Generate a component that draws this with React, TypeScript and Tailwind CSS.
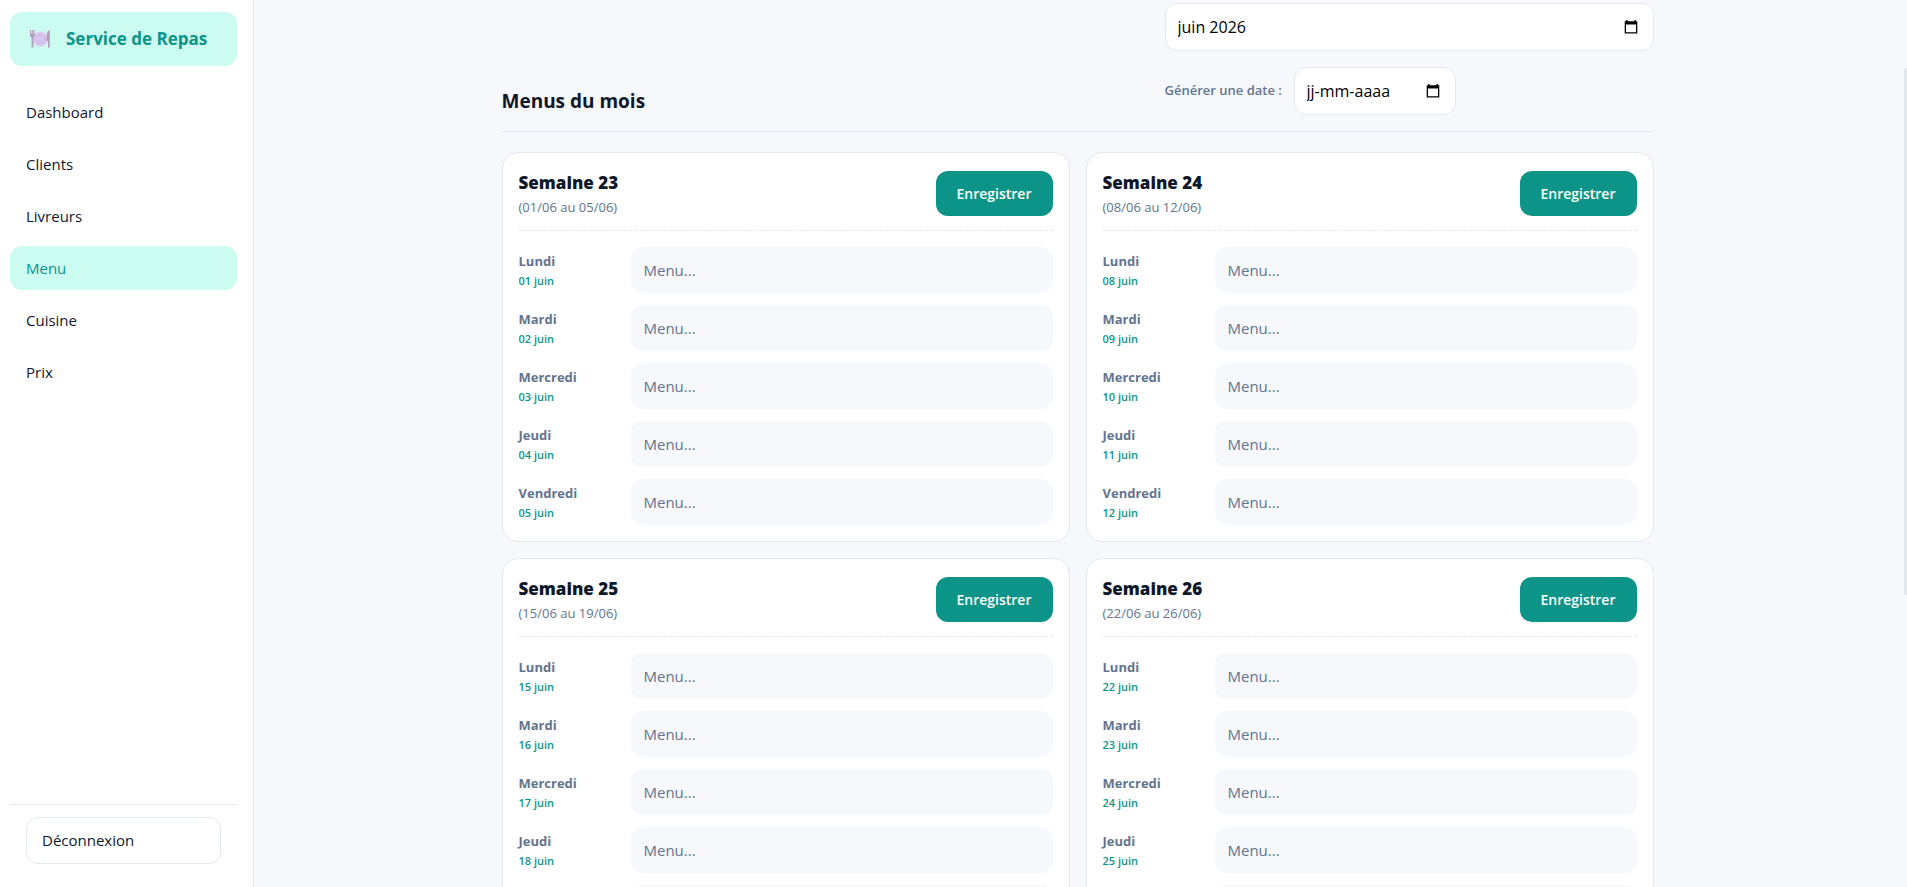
import { useState } from 'react';
import clsx from 'clsx';

const navItems = ['Dashboard', 'Clients', 'Livreurs', 'Menu', 'Cuisine', 'Prix'];
const dayNames = ['Lundi', 'Mardi', 'Mercredi', 'Jeudi', 'Vendredi'];

// premier lundi de chaque semaine de juin
const weeks = [
  { number: 23, monday: 1 },
  { number: 24, monday: 8 },
  { number: 25, monday: 15 },
  { number: 26, monday: 22 }
];

function pad(value: number) {
  return String(value).padStart(2, '0');
}

function PlateIcon() {
  return (
    <svg className="h-5 w-5" viewBox="0 0 20 20" aria-hidden="true">
      <circle cx="10.5" cy="10" r="7.5" fill="#dccbf1" />
      <circle cx="10.5" cy="10" r="4.800" fill="#d8c5ef" stroke="#c3b0de" strokeWidth=".9" />
      <g fill="#b0a2bb">
        <path d="M0 1h1v3.500h.8V1h1.200v3.500h.8V1h1v5.500c0 1-.6 1.500-1.300 1.800V18.500H1.500V8.300C.6 8 0 7.500 0 6.500z" />
        <path d="M19.800 1v17.500H18v-6.500h-1.400V6.500c0-3 1.200-5 3.200-5.500z" />
      </g>
    </svg>
  );
}

function CalendarIcon() {
  return (
    <svg className="h-4 w-4" viewBox="0 0 16 16" aria-hidden="true">
      <path
        d="M3 1h1.500v1.200h7V1H13v1.200h1.300v12.300H1.700V2.200H3zM3 5.500v7.700h10V5.500z"
        fill="#000"
        fillRule="evenodd"
      />
    </svg>
  );
}

type DateFieldProps = {
  id: string;
  label: string;
  value: string;
  placeholder?: string;
  className?: string;
  onChange: (value: string) => void;
};

function DateField({ id, label, value, placeholder, className, onChange }: DateFieldProps) {
  return (
    <div className={clsx('flex h-12 items-center rounded-xl border border-slate-200 bg-white px-3', className)}>
      <input
        id={id}
        type="text"
        aria-label={label}
        value={value}
        placeholder={placeholder}
        onChange={(e) => onChange(e.target.value)}
        className="w-full min-w-0 flex-1 bg-transparent text-base text-black outline-none placeholder:text-black"
      />
      <button type="button" aria-label="Ouvrir le calendrier" className="mr-0.5">
        <CalendarIcon />
      </button>
    </div>
  );
}

function Sidebar() {
  return (
    <aside className="flex w-[254px] shrink-0 flex-col border-r border-slate-200 bg-white pt-3 pr-4 pb-[11px] pl-2.5">
      <div className="flex h-[54px] items-center gap-4 rounded-xl bg-[#ccfbf1] px-5 text-[17px] font-bold whitespace-nowrap text-[#0d9488]">
        <PlateIcon />
        Service de Repas
      </div>
      <nav className="mt-6 flex flex-col gap-2">
        {navItems.map((item) => (
          <a
            key={item}
            href="#"
            className={clsx(
              'flex h-11 items-center rounded-xl px-4',
              item === 'Menu' ? 'bg-[#ccfbf1] text-[#0d9488]' : 'text-slate-900'
            )}
          >
            {item}
          </a>
        ))}
      </nav>
      <div className="mt-auto border-t border-slate-200 px-4 py-3">
        <button type="button" className="h-[47px] w-full rounded-xl border border-slate-200 px-[15px] text-left">
          Déconnexion
        </button>
      </div>
    </aside>
  );
}

function WeekCard({ number, monday }: { number: number; monday: number }) {
  const [menus, setMenus] = useState(dayNames.map(() => ''));

  function updateMenu(index: number, value: string) {
    setMenus(menus.map((menu, i) => (i === index ? value : menu)));
  }

  return (
    <form className="rounded-2xl border border-slate-200 bg-white p-4" onSubmit={(e) => e.preventDefault()}>
      <div className="flex items-center justify-between border-b border-dashed border-slate-200 pb-3">
        <div>
          <h3 className="text-[17px] leading-7 font-extrabold">Semaine {number}</h3>
          <p className="text-[13px] leading-[21px] text-slate-500">
            ({pad(monday)}/06 au {pad(monday + 4)}/06)
          </p>
        </div>
        <button type="submit" className="h-[45px] w-[117px] rounded-xl bg-[#0d9488] text-sm font-semibold text-white">
          Enregistrer
        </button>
      </div>
      <div className="mt-4 space-y-3">
        {dayNames.map((day, index) => {
          const id = `menu-${number}-${index}`;
          return (
            <div key={day} className="flex items-center gap-3">
              <label htmlFor={id} className="w-[100px] shrink-0 pt-0.5 text-[13px] leading-5 font-bold text-slate-500">
                {day}
                <span className="block text-[11px] font-semibold text-[#0d9488]">{pad(monday + index)} juin</span>
              </label>
              <input
                id={id}
                type="text"
                placeholder="Menu..."
                value={menus[index]}
                onChange={(e) => updateMenu(index, e.target.value)}
                className="h-[46px] min-w-0 flex-1 rounded-xl bg-[#f7f8fc] px-[13px] outline-none placeholder:text-slate-500"
              />
            </div>
          );
        })}
      </div>
    </form>
  );
}

export default function App() {
  const [month, setMonth] = useState('juin 2026');
  const [date, setDate] = useState('');

  return (
    <div className="flex h-screen bg-[#f7f8fc] font-['Open_Sans','Noto_Sans',sans-serif] text-[15px] text-slate-900">
      <Sidebar />
      <main className="relative min-w-0 flex-1 overflow-hidden pr-1.5">
        <div className="mx-auto max-w-[1200px] px-6 pt-[3px]">
          <div className="flex items-end justify-between border-b border-slate-200 pb-4">
            <h2 className="text-[19px] leading-7 font-bold">Menus du mois</h2>
            <div className="w-[489px] space-y-4">
              <DateField id="month" label="Mois" value={month} onChange={setMonth} />
              <div className="flex items-center gap-2">
                <label htmlFor="date" className="w-[121px] text-[13px] font-semibold whitespace-nowrap text-slate-500">
                  Générer une date :
                </label>
                <DateField
                  id="date"
                  label="Générer une date"
                  placeholder="jj-mm-aaaa"
                  className="w-[162px]"
                  value={date}
                  onChange={setDate}
                />
              </div>
            </div>
          </div>
          <div className="mt-5 grid grid-cols-2 gap-4">
            {weeks.map((week) => (
              <WeekCard key={week.number} number={week.number} monday={week.monday} />
            ))}
          </div>
        </div>
        <div className="absolute top-[68px] right-0 h-[527px] w-[3px] rounded-l-full bg-slate-200" />
      </main>
    </div>
  );
}
